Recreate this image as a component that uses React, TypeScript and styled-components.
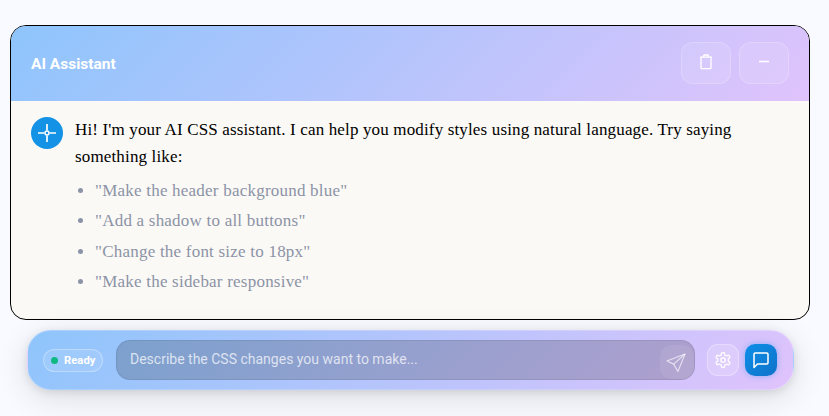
import React from "react";
import styled, { createGlobalStyle } from "styled-components";

const Global = createGlobalStyle`
  html, body { margin: 0; padding: 0; background: #f9faff; }
  body { font-family: "Liberation Serif", serif; overflow: hidden; }
`;

const Page = styled.div`
  width: 829px;
  height: 416px;
  padding: 25px 19px 0 10px;
  box-sizing: border-box;
  display: flex;
  flex-direction: column;
  background: #f9faff;
`;

const Panel = styled.section`
  height: 295px;
  box-sizing: border-box;
  border: 1px solid #000;
  border-radius: 16px;
  overflow: hidden;
  background: #fbf9f5;
  display: flex;
  flex-direction: column;
`;

const Header = styled.header`
  height: 75px;
  flex: none;
  box-sizing: border-box;
  padding: 0 20px;
  display: flex;
  align-items: center;
  justify-content: space-between;
  background: linear-gradient(135deg, #8ec5fc 0%, #e0c3fc 100%);
`;

const Title = styled.h1`
  margin: 0;
  font: 700 15.5px/20px Roboto, sans-serif;
  color: #fff;
`;

const HeaderActions = styled.div`
  display: flex;
  gap: 8px;
  margin-top: -1px;
`;

const GhostButton = styled.button`
  width: 50px;
  height: 42px;
  padding: 0 0 3px;
  border: 1px solid rgba(255, 255, 255, 0.2);
  border-radius: 12px;
  background: rgba(255, 255, 255, 0.1);
  color: #fff;
  display: flex;
  align-items: center;
  justify-content: center;
`;

const Body = styled.div`
  padding: 16px 20px;
  display: flex;
  gap: 12px;
  align-items: flex-start;
`;

const Avatar = styled.div`
  width: 32px;
  height: 32px;
  flex: none;
  border-radius: 50%;
  background: #1492e6;
  color: #fff;
  display: flex;
  align-items: center;
  justify-content: center;
`;

const Message = styled.div`
  flex: 1;
  margin-top: -1px;
  font-size: 17px;
  line-height: 27px;
  letter-spacing: 0.15px;
  color: #000;
`;

const Intro = styled.p`
  margin: 0;
`;

const Suggestions = styled.ul`
  margin: 7px 0 0;
  padding: 0 0 0 20px;
  list-style: disc;
  color: #8b93a7;
  letter-spacing: 0.22px;
`;

const Suggestion = styled.li`
  height: 27px;
  margin-bottom: 3.3px;
  line-height: 27px;
`;

const Bar = styled.div`
  margin: 10px 16px 0 17px;
  height: 60px;
  box-sizing: border-box;
  padding: 0 16px 0 15px;
  border: 1px solid rgba(255, 255, 255, 0.2);
  border-radius: 24px;
  display: flex;
  align-items: center;
  background: linear-gradient(135deg, #8ec5fc 0%, #e0c3fc 100%);
  box-shadow: 0 8px 32px rgba(0, 0, 0, 0.12), 0 2px 8px rgba(0, 0, 0, 0.1);
`;

const Status = styled.div`
  width: 60px;
  height: 23px;
  margin-top: 1px;
  flex: none;
  box-sizing: border-box;
  border: 1px solid rgba(255, 255, 255, 0.3);
  border-radius: 12px;
  background: rgba(255, 255, 255, 0.1);
  display: flex;
  align-items: center;
  gap: 6px;
  padding-left: 7px;
  font: 700 11.3px/14px Roboto, sans-serif;
  color: #fff;
`;

const Dot = styled.span`
  width: 7px;
  height: 7px;
  border-radius: 50%;
  background: #10b981;
`;

const InputWrap = styled.div`
  width: 579px;
  height: 40px;
  margin-left: 13px;
  flex: none;
  box-sizing: border-box;
  border: 1px solid rgba(0, 0, 0, 0.08);
  border-radius: 14px;
  background: rgba(0, 0, 0, 0.18);
  display: flex;
  align-items: center;
  padding: 0 0 0 11px;
`;

const Input = styled.input`
  flex: 1;
  min-width: 0;
  margin-bottom: 2px;
  border: 0;
  outline: 0;
  background: transparent;
  font: 400 14px/20px Roboto, sans-serif;
  color: #fff;
  &::placeholder { color: rgba(255, 255, 255, 0.72); opacity: 1; }
`;

const SendButton = styled.button`
  width: 34px;
  height: 34px;
  margin-top: 4px;
  padding: 0 2px 0 0;
  border: 0;
  border-radius: 12px;
  background: rgba(255, 255, 255, 0.08);
  color: rgba(255, 255, 255, 0.65);
  display: flex;
  align-items: center;
  justify-content: center;
`;

const SettingsButton = styled.button`
  width: 32px;
  height: 32px;
  margin-left: 12px;
  flex: none;
  padding: 0;
  border: 1px solid rgba(255, 255, 255, 0.3);
  border-radius: 11px;
  background: rgba(255, 255, 255, 0.15);
  color: rgba(255, 255, 255, 0.9);
  display: flex;
  align-items: center;
  justify-content: center;
`;

const ChatButton = styled.button`
  width: 32px;
  height: 32px;
  margin-left: 6px;
  flex: none;
  padding: 0;
  border: 0;
  border-radius: 10px;
  background: linear-gradient(135deg, #0d8fe8, #0f72c9);
  box-shadow: 0 0 6px rgba(20, 146, 230, 0.4);
  color: #fff;
  display: flex;
  align-items: center;
  justify-content: center;
`;

const TrashIcon = () => (
  <svg width="14" height="16" viewBox="0 0 14 16" fill="none" stroke="currentColor" strokeWidth="1.3" strokeLinejoin="round">
    <path d="M1 3.2h12" />
    <path d="M2 3.2v10.6a.9.9 0 0 0 .9.9h8.2a.9.9 0 0 0 .9-.9V3.2" />
    <path d="M4.6 3V1.7a.7.7 0 0 1 .7-.7h3.4a.7.7 0 0 1 .7.7V3" />
  </svg>
);

const MinusIcon = () => (
  <svg width="16" height="16" viewBox="0 0 16 16" fill="none" stroke="currentColor" strokeWidth="1.3">
    <path d="M3 7.5h10" />
  </svg>
);

const TargetIcon = () => (
  <svg width="18" height="18" viewBox="0 0 18 18" fill="none" stroke="currentColor" strokeWidth="1.7">
    <circle cx="9" cy="9" r="2" strokeWidth="1.4" />
    <path d="M9 0v6.5M9 11.5V18M0 9h6.5M11.5 9H18" />
  </svg>
);

const SendIcon = () => (
  <svg width="20" height="19" viewBox="0 0 21 20" fill="none" stroke="currentColor" strokeWidth="1.2" strokeLinejoin="round">
    <path d="M20 1 1 8.5l7 3.2L12.5 19.5 20 1Z" />
    <path d="M20 1 8 11.7" />
  </svg>
);

const GearIcon = () => (
  <svg width="18" height="18" viewBox="0 0 24 24" fill="none" stroke="currentColor" strokeWidth="2" strokeLinecap="round" strokeLinejoin="round">
    <path d="M12.22 2h-.44a2 2 0 0 0-2 2v.18a2 2 0 0 1-1 1.73l-.43.25a2 2 0 0 1-2 0l-.15-.08a2 2 0 0 0-2.73.73l-.22.38a2 2 0 0 0 .73 2.73l.15.1a2 2 0 0 1 1 1.72v.51a2 2 0 0 1-1 1.74l-.15.09a2 2 0 0 0-.73 2.73l.22.38a2 2 0 0 0 2.73.73l.15-.08a2 2 0 0 1 2 0l.43.25a2 2 0 0 1 1 1.73V20a2 2 0 0 0 2 2h.44a2 2 0 0 0 2-2v-.18a2 2 0 0 1 1-1.73l.43-.25a2 2 0 0 1 2 0l.15.08a2 2 0 0 0 2.73-.73l.22-.39a2 2 0 0 0-.73-2.73l-.15-.08a2 2 0 0 1-1-1.74v-.5a2 2 0 0 1 1-1.74l.15-.09a2 2 0 0 0 .73-2.73l-.22-.38a2 2 0 0 0-2.73-.73l-.15.08a2 2 0 0 1-2 0l-.43-.25a2 2 0 0 1-1-1.73V4a2 2 0 0 0-2-2z" />
    <circle cx="12" cy="12" r="3" />
  </svg>
);

const ChatIcon = () => (
  <svg width="18" height="18" viewBox="0 0 18 18" fill="none" stroke="currentColor" strokeWidth="1.5" strokeLinejoin="round">
    <path d="M2 16.5V3.2A1.2 1.2 0 0 1 3.2 2h11.6A1.2 1.2 0 0 1 16 3.2v8.6a1.2 1.2 0 0 1-1.2 1.2H5.5L2 16.5Z" />
  </svg>
);

const suggestions = [
  '"Make the header background blue"',
  '"Add a shadow to all buttons"',
  '"Change the font size to 18px"',
  '"Make the sidebar responsive"',
];

export default function App() {
  return (
    <>
      <Global />
      <Page>
        <Panel>
          <Header>
            <Title>AI Assistant</Title>
            <HeaderActions>
              <GhostButton aria-label="Clear"><TrashIcon /></GhostButton>
              <GhostButton aria-label="Minimize"><MinusIcon /></GhostButton>
            </HeaderActions>
          </Header>
          <Body>
            <Avatar><TargetIcon /></Avatar>
            <Message>
              <Intro>Hi! I'm your AI CSS assistant. I can help you modify styles using natural language. Try saying something like:</Intro>
              <Suggestions>
                {suggestions.map((s) => <Suggestion key={s}>{s}</Suggestion>)}
              </Suggestions>
            </Message>
          </Body>
        </Panel>
        <Bar>
          <Status><Dot />Ready</Status>
          <InputWrap>
            <Input placeholder="Describe the CSS changes you want to make..." />
            <SendButton aria-label="Send"><SendIcon /></SendButton>
          </InputWrap>
          <SettingsButton aria-label="Settings"><GearIcon /></SettingsButton>
          <ChatButton aria-label="Chat"><ChatIcon /></ChatButton>
        </Bar>
      </Page>
    </>
  );
}
